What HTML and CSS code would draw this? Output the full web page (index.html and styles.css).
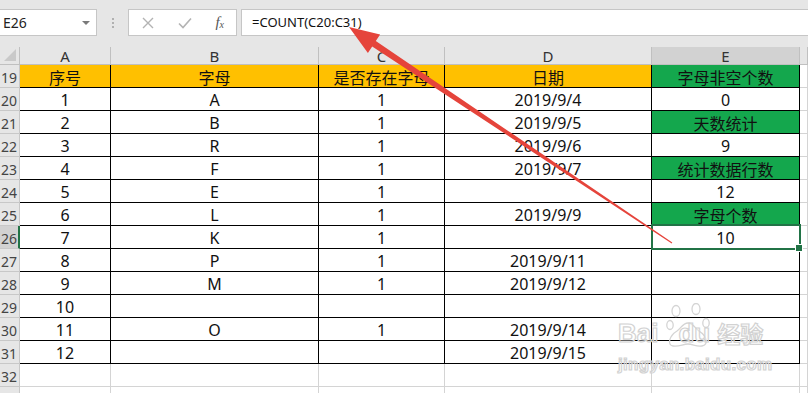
FILE: index.html
```html
<!DOCTYPE html>
<html lang="zh-CN">
<head>
    <meta charset="utf-8">
    <title>Excel - COUNT</title>
    <link rel="stylesheet" href="styles.css">
</head>
<body>
    <div class="toolbar">
        <div class="namebox"><span>E26</span><span class="caret"></span></div>
        <div class="grip"><i></i><i></i><i></i></div>
        <div class="fxbox">
            <svg width="12" height="12" viewBox="0 0 12 12"><path d="M1 1 L11 11 M11 1 L1 11" stroke="#b3b3b3" stroke-width="1.4" fill="none"/></svg>
            <svg width="14" height="12" viewBox="0 0 14 12"><path d="M1 6.5 L5 10.5 L13 1.5" stroke="#b3b3b3" stroke-width="1.6" fill="none"/></svg>
            <span class="fx">f<sub>x</sub></span>
        </div>
        <div class="formula">=COUNT(C20:C31)</div>
    </div>

    <div class="sheet">
        <div class="c hd corner"><svg width="12" height="12" viewBox="0 0 12 12"><polygon points="12,0 12,12 0,12" fill="#c9c9c9"/></svg></div>
        <div class="c hd">A</div><div class="c hd">B</div><div class="c hd">C</div><div class="c hd">D</div><div class="c hd sel">E</div><div class="c hd"></div>

        <div class="c rh">19</div>
        <div class="c b or">序号</div><div class="c b or">字母</div><div class="c b or">是否存在字母</div><div class="c b or">日期</div><div class="c b gr">字母非空个数</div><div class="c"></div>

        <div class="c rh">20</div>
        <div class="c b">1</div><div class="c b">A</div><div class="c b">1</div><div class="c b">2019/9/4</div><div class="c b">0</div><div class="c"></div>

        <div class="c rh">21</div>
        <div class="c b">2</div><div class="c b">B</div><div class="c b">1</div><div class="c b">2019/9/5</div><div class="c b gr">天数统计</div><div class="c"></div>

        <div class="c rh">22</div>
        <div class="c b">3</div><div class="c b">R</div><div class="c b">1</div><div class="c b">2019/9/6</div><div class="c b">9</div><div class="c"></div>

        <div class="c rh">23</div>
        <div class="c b">4</div><div class="c b">F</div><div class="c b">1</div><div class="c b">2019/9/7</div><div class="c b gr">统计数据行数</div><div class="c"></div>

        <div class="c rh">24</div>
        <div class="c b">5</div><div class="c b">E</div><div class="c b">1</div><div class="c b"></div><div class="c b">12</div><div class="c"></div>

        <div class="c rh">25</div>
        <div class="c b">6</div><div class="c b">L</div><div class="c b">1</div><div class="c b">2019/9/9</div><div class="c b gr">字母个数</div><div class="c"></div>

        <div class="c rh active">26</div>
        <div class="c b">7</div><div class="c b">K</div><div class="c b">1</div><div class="c b"></div><div class="c b current">10</div><div class="c"></div>

        <div class="c rh">27</div>
        <div class="c b">8</div><div class="c b">P</div><div class="c b">1</div><div class="c b">2019/9/11</div><div class="c b"></div><div class="c"></div>

        <div class="c rh">28</div>
        <div class="c b">9</div><div class="c b">M</div><div class="c b">1</div><div class="c b">2019/9/12</div><div class="c b"></div><div class="c"></div>

        <div class="c rh">29</div>
        <div class="c b">10</div><div class="c b"></div><div class="c b"></div><div class="c b"></div><div class="c b"></div><div class="c"></div>

        <div class="c rh">30</div>
        <div class="c b">11</div><div class="c b">O</div><div class="c b">1</div><div class="c b">2019/9/14</div><div class="c b"></div><div class="c"></div>

        <div class="c rh">31</div>
        <div class="c b">12</div><div class="c b"></div><div class="c b"></div><div class="c b">2019/9/15</div><div class="c b"></div><div class="c"></div>

        <div class="c rh">32</div>
        <div class="c"></div><div class="c"></div><div class="c"></div><div class="c"></div><div class="c"></div><div class="c"></div>

        <div class="c rh"></div>
        <div class="c"></div><div class="c"></div><div class="c"></div><div class="c"></div><div class="c"></div><div class="c"></div>
    </div>

    <!-- baidu jingyan watermark -->
    <div class="watermark">
        <div class="wm-logo">
            <span>Bai</span>
            <span class="wm-du">du</span>
            <span class="wm-cn">经验</span>
            <svg class="paw" width="44" height="46" viewBox="0 0 44 46">
                <g fill="none" stroke="#d4d4d4" stroke-width="1.3">
                    <ellipse cx="10" cy="8" rx="4" ry="5.5"/>
                    <ellipse cx="30" cy="6" rx="4" ry="5.5"/>
                    <ellipse cx="4" cy="22" rx="3.2" ry="4.5"/>
                    <ellipse cx="40" cy="20" rx="3.2" ry="4.5"/>
                    <path d="M7 43 C1 42 3 33 11 28 C15 25 17 20 22 20 C27 20 29 25 33 28 C41 33 43 42 36 43 C30 44 27 41 22 41 C17 41 13 44 7 43 Z"/>
                </g>
            </svg>
        </div>
        <div class="wm-url">jingyan.baidu.com</div>
    </div>

    <svg class="arrow" width="808" height="393" viewBox="0 0 808 393">
        <polygon points="349,27 380.1,34.5 375.8,41 672.3,242.5 671.7,243.5 372.2,46.4 367.9,52.9" fill="#e5443b"/>
    </svg>
</body>
</html>
```

FILE: styles.css
```css
* { box-sizing: border-box; margin: 0; padding: 0; }
body { width: 808px; height: 393px; overflow: hidden; background: #fff; color: #111; position: relative; font-family: "Noto Sans", "Noto Sans CJK SC", sans-serif; }

/* formula bar */
.toolbar { height: 47px; background: #e6e6e6; display: flex; align-items: flex-start; padding-top: 9px; }
.namebox { width: 97px; height: 27px; background: #fff; border: 1px solid #c6c6c6; border-left: none; display: flex; align-items: center; justify-content: space-between; padding: 0 6px 0 3px; font-size: 14px; color: #222; }
.caret { width: 0; height: 0; border-left: 4px solid transparent; border-right: 4px solid transparent; border-top: 4px solid #7a7a7a; }
.grip { width: 31px; height: 27px; display: flex; flex-direction: column; align-items: center; justify-content: center; gap: 2px; }
.grip i { width: 2px; height: 2px; background: #b0b0b0; }
.fxbox { width: 109px; height: 27px; background: #fff; border: 1px solid #c6c6c6; display: flex; align-items: center; justify-content: space-between; padding: 0 12px 0 13px; }
.fx { font-family: "Liberation Serif", serif; font-style: italic; font-size: 15px; color: #555; }
.fx sub { font-size: 10px; vertical-align: -1px; }
.formula { flex: 1; height: 27px; margin-left: 4px; background: #fff; border: 1px solid #c6c6c6; border-right: none; padding-left: 10px; font-size: 13px; line-height: 25px; color: #111; }

/* grid */
.sheet { display: grid; grid-template-columns: 20px 91px 208px 126px 207px 148px 1fr; grid-template-rows: 18px repeat(15, 23px); }
.c { border-right: 1px solid #d4d4d4; border-bottom: 1px solid #d4d4d4; display: flex; align-items: center; justify-content: center; padding-top: 2px; font-size: 16px; white-space: nowrap; }
.hd { background: #e6e6e6; border-color: #c0c0c0; font-size: 15px; color: #333; padding-top: 0; }
.hd.sel { background: #d2d2d2; }
.corner { justify-content: flex-end; align-items: flex-end; padding: 0 3px 3px 0; }
.rh { background: #e6e6e6; border-color: #c8c8c8; justify-content: flex-end; padding: 3px 2px 0 0; font-size: 14px; color: #444; }
.rh.active { background: #d2d2d2; border-right: 2px solid #217346; padding-right: 1px; }
.b { border-color: #000; }
.or { background: #ffc000; }
.gr { background: #14a74d; }
.current { position: relative; }
.current::after { content: ""; position: absolute; top: -2px; left: -1px; right: -2px; bottom: -2px; border: 2px solid #217346; }
.current::before { content: ""; position: absolute; right: -4px; bottom: -4px; width: 6px; height: 6px; background: #217346; border: 1px solid #fff; z-index: 2; }

/* watermark */
.watermark { position: absolute; left: 618px; top: 303px; color: rgba(255, 255, 255, 0.4); -webkit-text-stroke: 1.2px #d2d2d2; }
.wm-logo { position: relative; display: flex; align-items: flex-end; font-family: "Liberation Sans", sans-serif; font-weight: bold; font-size: 26px; line-height: 28px; height: 44px; }
.wm-du { margin-left: 20px; position: relative; z-index: 1; }
.wm-cn { font-family: "Noto Sans CJK SC", sans-serif; font-size: 23px; margin-left: 7px; }
.paw { position: absolute; left: 48px; top: 0; }
.wm-url { font-family: "Liberation Sans", sans-serif; font-weight: bold; font-size: 17px; margin-top: 8px; letter-spacing: 0.3px; }

.arrow { position: absolute; left: 0; top: 0; pointer-events: none; }
```
